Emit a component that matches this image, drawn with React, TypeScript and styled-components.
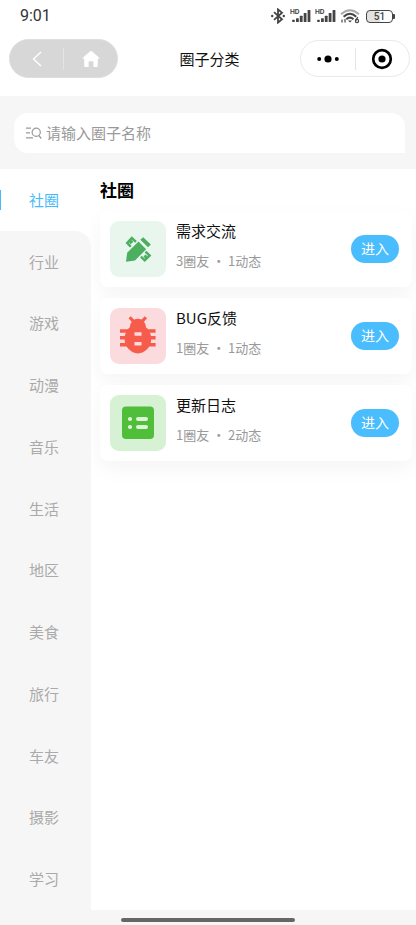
import React from "react";
import styled, { createGlobalStyle } from "styled-components";

const GlobalStyle = createGlobalStyle`
  *, *::before, *::after { box-sizing: border-box; }
  body {
    margin: 0;
    background: #fff;
    color: #111;
    font-family: "Noto Sans CJK SC", "Noto Sans", sans-serif;
  }
  button, input { font: inherit; }
`;

const Page = styled.div`
  display: flex;
  flex-direction: column;
  min-height: 100vh;
`;

const StatusBar = styled.div`
  display: flex;
  align-items: center;
  justify-content: space-between;
  height: 32px;
  padding: 0 20px;
`;

const Clock = styled.time`
  font-family: Roboto, sans-serif;
  font-size: 16px;
  font-weight: 400;
  line-height: 20px;
  color: #333;
`;

const StatusIcons = styled.div`
  display: flex;
  align-items: center;
  gap: 4px;
`;

const Battery = styled.div`
  position: relative;
  width: 27px;
  height: 13px;
  margin: 0 3px 0 2px;
  border: 1px solid #444;
  border-radius: 4px;
  background: linear-gradient(90deg, #e2e2e2 50%, #fff 50%);
  color: #444;
  font: 500 10px/11px Roboto, sans-serif;
  text-align: center;

  &::after {
    content: "";
    position: absolute;
    top: 3px;
    right: -3px;
    width: 2px;
    height: 5px;
    border-radius: 0 1px 1px 0;
    background: #444;
  }
`;

const NavBar = styled.header`
  display: grid;
  grid-template-columns: 1fr auto 1fr;
  align-items: center;
  height: 64px;
  padding: 0 6px 11px 9px;
`;

const PageTitle = styled.h1`
  margin: 0;
  font-size: 15px;
  font-weight: 400;
  line-height: 20px;
`;

const Capsule = styled.div<{ $filled?: boolean }>`
  display: flex;
  align-items: center;
  justify-self: ${(p) => (p.$filled ? "start" : "end")};
  width: ${(p) => (p.$filled ? 109 : 110)}px;
  height: ${(p) => (p.$filled ? 39 : 37)}px;
  border: 1px solid ${(p) => (p.$filled ? "#dedede" : "#e9e9e9")};
  border-radius: 20px;
  background: ${(p) => (p.$filled ? "#d7d7d7" : "#fff")};
`;

const CapsuleButton = styled.button`
  display: flex;
  flex: 1;
  align-items: center;
  justify-content: center;
  height: 100%;
  padding: 0;
  border: 0;
  background: none;
`;

const CapsuleDivider = styled.span`
  width: 1px;
  height: 22px;
  background: #e4e4e4;
`;

const SearchArea = styled.div`
  padding: 17px 11px 16px 14px;
  background: #f6f6f6;
`;

const SearchBox = styled.label`
  display: flex;
  align-items: center;
  gap: 4px;
  height: 40px;
  padding: 0 12px;
  border-radius: 14px 14px 0 14px;
  background: #fff;
`;

const SearchInput = styled.input`
  flex: 1;
  min-width: 0;
  padding: 0;
  border: 0;
  outline: 0;
  background: none;
  font-size: 15px;
  line-height: 22px;
  color: #333;

  &::placeholder { color: #999; opacity: 1; }
`;

const Content = styled.div`
  display: grid;
  flex: 1;
  grid-template-columns: 91px minmax(0, 1fr);
`;

const Sidebar = styled.nav`
  display: flex;
  flex-direction: column;
`;

const CategoryButton = styled.button<{ $active?: boolean; $first?: boolean }>`
  position: relative;
  flex: 1;
  min-height: 48px;
  padding: 0 3px 0 0;
  border: 0;
  border-top-right-radius: ${(p) => (p.$first ? 16 : 0)}px;
  background: ${(p) => (p.$active ? "#fff" : "#f6f6f6")};
  color: ${(p) => (p.$active ? "#46bbfb" : "#aaa")};
  font-size: 15px;
  line-height: 20px;

  &::before {
    content: "";
    display: ${(p) => (p.$active ? "block" : "none")};
    position: absolute;
    top: calc(50% - 10px);
    left: 0;
    width: 1px;
    height: 20px;
    background: #46bbfb;
  }
`;

const Main = styled.main`
  padding: 10px 4px 10px 9px;
`;

const SectionTitle = styled.h2`
  margin: 0 0 10px;
  font-size: 17px;
  font-weight: 700;
  line-height: 22px;
  color: #000;
`;

const CircleList = styled.div`
  display: flex;
  flex-direction: column;
  gap: 11px;
`;

const Card = styled.article`
  display: flex;
  align-items: center;
  gap: 10px;
  height: 76px;
  padding: 10px 13px 10px 10px;
  border-radius: 8px;
  background: #fff;
  box-shadow: 0 8px 20px rgba(0, 0, 0, 0.045);
`;

const IconTile = styled.div<{ $color: string }>`
  width: 56px;
  height: 56px;
  overflow: hidden;
  border-radius: 9px;
  background: ${(p) => p.$color};
`;

const CardText = styled.div`
  display: flex;
  flex: 1;
  flex-direction: column;
  gap: 10px;
  min-width: 0;
  padding-bottom: 6px;
`;

const CardTitle = styled.h3`
  margin: 0;
  font-size: 15px;
  font-weight: 400;
  line-height: 20px;
`;

const CardMeta = styled.p`
  margin: 0;
  font-size: 13px;
  line-height: 20px;
  color: #999;
`;

const EnterButton = styled.button`
  width: 48px;
  height: 28px;
  padding: 0 0 2px;
  border: 0;
  border-radius: 14px;
  background: #49bdfd;
  color: #fff;
  font-size: 14px;
  line-height: 26px;
`;

const BottomBar = styled.footer`
  display: flex;
  justify-content: center;
  height: 15px;
  padding-top: 8px;
  background: #f6f6f6;
`;

const HomeIndicator = styled.span`
  width: 42%;
  height: 4px;
  border-radius: 2px;
  background: #666;
`;

const BluetoothIcon = () => (
  <svg width="16" height="16" viewBox="0 0 16 16" fill="none" stroke="#444" strokeWidth="1.8" aria-hidden="true">
    <path d="M4 4.2 12 11.3 8 14.6V1.4L12 4.7 4 11.8" />
    <circle cx="2.2" cy="8" r="1.2" fill="#444" stroke="none" />
    <circle cx="13.8" cy="8" r="1.2" fill="#444" stroke="none" />
  </svg>
);

const SignalIcon = () => (
  <svg width="21" height="16" viewBox="0 0 21 16" fill="#444" aria-hidden="true">
    <text x="0" y="6" fontFamily="Inter, sans-serif" fontSize="6.5" fontWeight="700">HD</text>
    <rect x="2.2" y="11.8" width="2.5" height="2.2" rx=".5" />
    <rect x="6" y="10.2" width="2.8" height="3.8" rx=".5" />
    <rect x="9.8" y="7.8" width="2.8" height="6.2" rx=".5" />
    <rect x="13.7" y="5" width="2.8" height="9" rx=".5" />
    <rect x="17.6" y="2" width="2.8" height="12" rx=".5" />
  </svg>
);

const WifiIcon = () => (
  <svg width="20" height="16" viewBox="0 0 20 16" fill="none" strokeWidth="2" aria-hidden="true">
    <path d="M1 6.2Q10-1.8 19 6.2" stroke="#aaa" />
    <path d="M3.6 8.8Q10 2.8 16.2 8.8" stroke="#444" />
    <path d="M6.3 11.2Q10 8 13.5 11.2" stroke="#444" />
    <path d="M8 12.5h4L10 14.6Z" fill="#444" />
    <path d="M2 14.5v-3M5 11v3.5" stroke="#555" strokeWidth="1.3" />
    <path d="M17.8 9.2 15.6 12.6" stroke="#444" strokeWidth="1.3" />
    <circle cx="17" cy="13" r="1.6" stroke="#444" strokeWidth="1.2" />
  </svg>
);

const BackIcon = () => (
  <svg width="12" height="18" viewBox="0 0 12 18" fill="none" stroke="#fff" strokeWidth="1.4" aria-hidden="true">
    <path d="M10 2 2.5 9l7.5 7" />
  </svg>
);

const HomeIcon = () => (
  <svg width="18" height="18" viewBox="0 0 18 18" fill="#fff" aria-hidden="true">
    <path d="M8.1 1.3Q9 .6 9.9 1.3L17.2 7.8Q17.8 8.5 16.9 8.8H15.8V16Q15.8 17 14.8 17H11.4V12.2Q11.4 11.2 10.4 11.2H7.6Q6.6 11.2 6.6 12.2V17H3.2Q2.2 17 2.2 16V8.8H1.1Q.2 8.5.8 7.8Z" />
  </svg>
);

const MoreIcon = () => (
  <svg width="24" height="10" viewBox="0 0 24 10" fill="#000" aria-hidden="true">
    <circle cx="3.2" cy="5" r="2" />
    <circle cx="12" cy="5" r="3.6" />
    <circle cx="20.8" cy="5" r="2" />
  </svg>
);

const TargetIcon = () => (
  <svg width="22" height="22" viewBox="0 0 22 22" fill="none" aria-hidden="true">
    <circle cx="11" cy="11" r="8.8" stroke="#000" strokeWidth="2.7" />
    <circle cx="11" cy="11" r="3.6" fill="#000" />
  </svg>
);

const SearchIcon = () => (
  <svg width="16" height="14" viewBox="0 0 16 14" fill="none" stroke="#999" strokeWidth="1.2" aria-hidden="true">
    <path d="M0 2.2h5M0 6.8h4M0 11.8h7" />
    <circle cx="10.2" cy="6.2" r="4.1" />
    <path d="m12.8 9.5 2.5 3" />
  </svg>
);

const DesignIcon = () => (
  <svg width="56" height="56" viewBox="0 0 56 56" fill="#4caf60" aria-hidden="true">
    <path d="M16 40.8 17.2 31.8 28.5 20.5 36.2 28.2 25 39.5Z" />
    <path d="M30.3 18.7 33.2 16.2 40.8 23.4 38 26.3Z" />
    <g fill="none" stroke="#4caf60" strokeWidth="2.4">
      <path d="M26 20.8 21.8 17 17.2 21.9 20.8 25.8M19.8 22.2l2.8-2.2" />
      <path d="M35.5 30.7 39.6 34.6 34.7 39.3 30.9 35.7M34.3 36.6l2-2.4" />
    </g>
  </svg>
);

const BugIcon = () => (
  <svg width="56" height="56" viewBox="0 0 56 56" fill="#f65c4c" aria-hidden="true">
    <ellipse cx="27.9" cy="30.8" rx="13.3" ry="14.6" />
    <ellipse cx="27.9" cy="19" rx="8" ry="8.2" />
    <path d="m19.7 9.2 4.7 5.2M35.9 9.2l-4.7 5.2" stroke="#f65c4c" strokeWidth="3.2" />
    <path d="M10 21.2h9v3.6h-9zM10 28h7v3.4h-7zM10 35h7v3.6h-7zM36.6 21.2h9v3.6h-9zM38.6 28h7v3.4h-7zM38.6 35h7v3.6h-7z" />
    <path d="M24.5 24.2h7v3.6h-7zM24.5 34h7v3.6h-7z" fill="#fddcde" />
  </svg>
);

const LogIcon = () => (
  <svg width="56" height="56" viewBox="0 0 56 56" aria-hidden="true">
    <rect x="12" y="11.5" width="32" height="32.5" rx="4" fill="#50bd3b" />
    <g fill="#dcf4d8">
      <circle cx="20" cy="24" r="2.1" />
      <circle cx="20" cy="32" r="2.1" />
      <rect x="26" y="22" width="12" height="4" rx="2" />
      <rect x="26" y="30" width="12" height="4" rx="2" />
    </g>
  </svg>
);

const categories = ["社圈", "行业", "游戏", "动漫", "音乐", "生活", "地区", "美食", "旅行", "车友", "摄影", "学习"];

const circles = [
  { title: "需求交流", meta: "3圈友 · 1动态", tile: "#e8f6ee", Icon: DesignIcon },
  { title: "BUG反馈", meta: "1圈友 · 1动态", tile: "#fcdbde", Icon: BugIcon },
  { title: "更新日志", meta: "1圈友 · 2动态", tile: "#d6f1d3", Icon: LogIcon },
];

export default function App() {
  return (
    <Page>
      <GlobalStyle />
      <StatusBar>
        <Clock>9:01</Clock>
        <StatusIcons>
          <BluetoothIcon />
          <SignalIcon />
          <SignalIcon />
          <WifiIcon />
          <Battery>51</Battery>
        </StatusIcons>
      </StatusBar>
      <NavBar>
        <Capsule $filled>
          <CapsuleButton aria-label="返回"><BackIcon /></CapsuleButton>
          <CapsuleDivider />
          <CapsuleButton aria-label="首页"><HomeIcon /></CapsuleButton>
        </Capsule>
        <PageTitle>圈子分类</PageTitle>
        <Capsule>
          <CapsuleButton aria-label="更多"><MoreIcon /></CapsuleButton>
          <CapsuleDivider />
          <CapsuleButton aria-label="关闭"><TargetIcon /></CapsuleButton>
        </Capsule>
      </NavBar>
      <SearchArea>
        <SearchBox>
          <SearchIcon />
          <SearchInput type="text" aria-label="搜索圈子" placeholder="请输入圈子名称" />
        </SearchBox>
      </SearchArea>
      <Content>
        <Sidebar>
          {categories.map((name, i) => (
            <CategoryButton key={name} $active={i === 0} $first={i === 1}>{name}</CategoryButton>
          ))}
        </Sidebar>
        <Main>
          <SectionTitle>社圈</SectionTitle>
          <CircleList>
            {circles.map(({ title, meta, tile, Icon }) => (
              <Card key={title}>
                <IconTile $color={tile}><Icon /></IconTile>
                <CardText>
                  <CardTitle>{title}</CardTitle>
                  <CardMeta>{meta}</CardMeta>
                </CardText>
                <EnterButton>进入</EnterButton>
              </Card>
            ))}
          </CircleList>
        </Main>
      </Content>
      <BottomBar><HomeIndicator /></BottomBar>
    </Page>
  );
}
